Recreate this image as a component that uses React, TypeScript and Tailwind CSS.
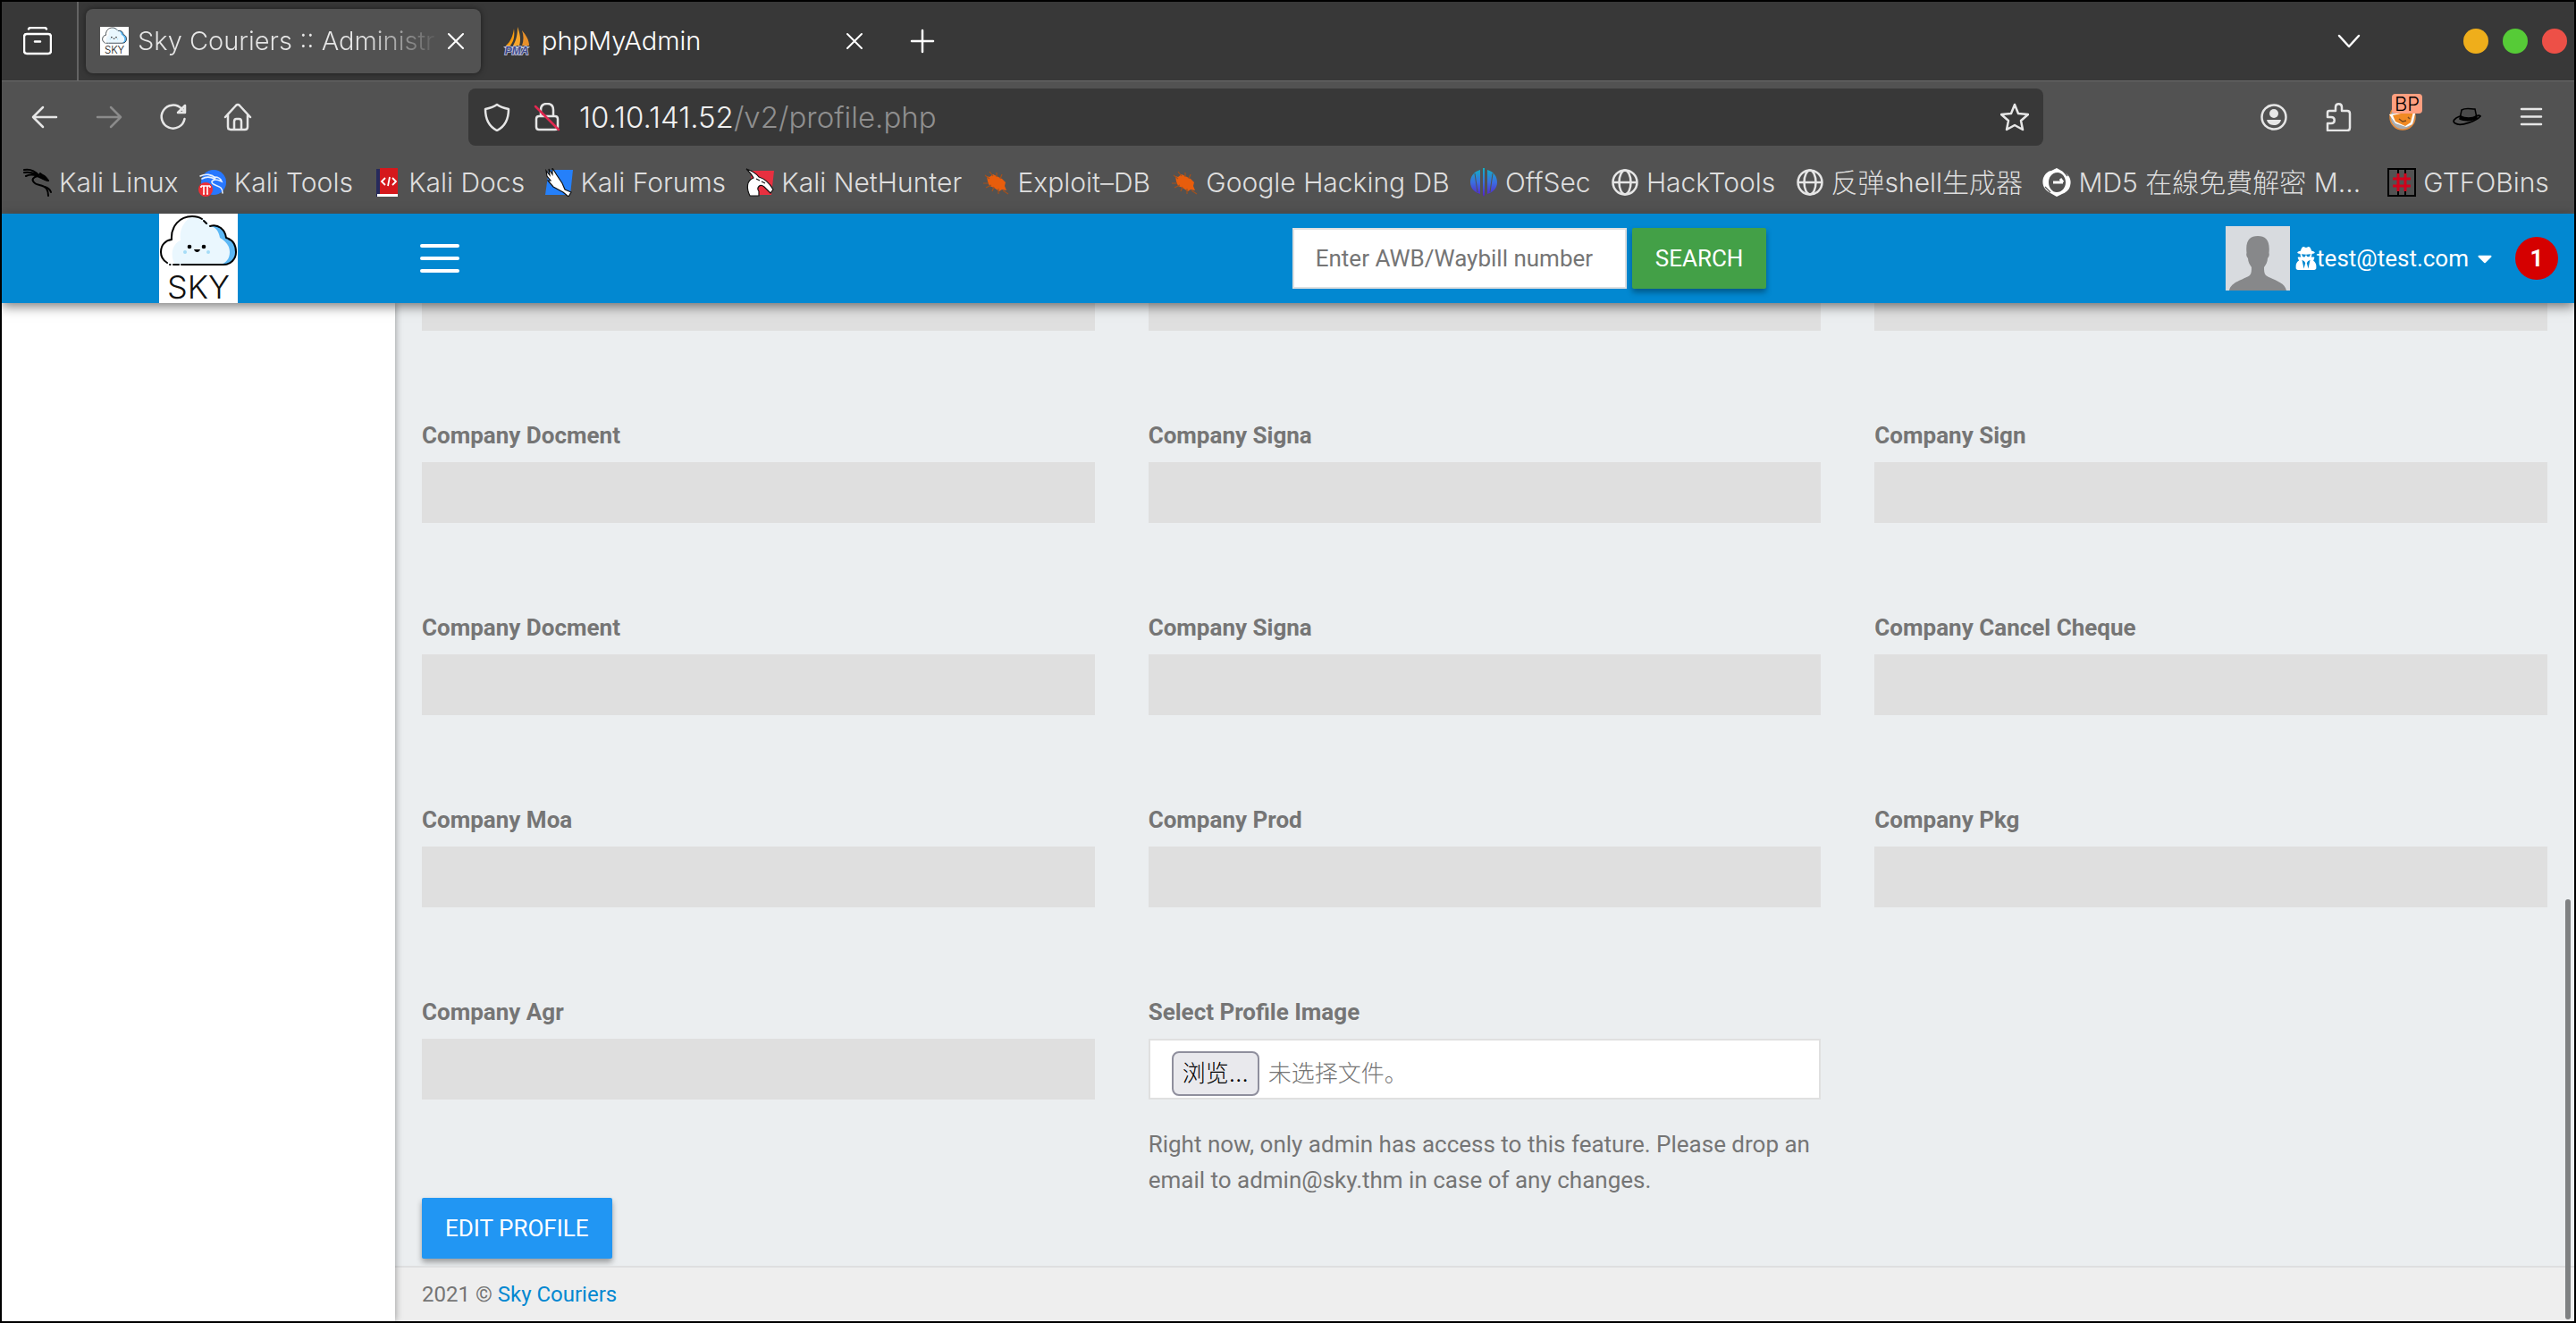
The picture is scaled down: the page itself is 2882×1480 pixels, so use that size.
import { ReactNode } from 'react'
import { FaCaretDown, FaUserSecret } from 'react-icons/fa'

const chromeFont = "font-['Inter','Noto_Sans_CJK_SC',sans-serif] font-light"

const fieldRows = [
    ['Company Docment', 'Company Signa', 'Company Sign'],
    ['Company Docment', 'Company Signa', 'Company Cancel Cheque'],
    ['Company Moa', 'Company Prod', 'Company Pkg'],
]

function SkyLogo(props: { className?: string }) {
    return (
        <svg viewBox="0 0 88 100" className={props.className} aria-hidden="true">
            <rect width="88" height="100" fill="#fff" />
            <path d="M56 14C66 11 74 18 75 27C82 29 86 35 86 43C86 51 80 57 72 57H18C8 57 2 51 2 43C2 35 7 30 14 29C13 14 23 3 37 3C46 3 53 7 56 14Z" fill="#5cb8f5" />
            <path d="M56 14C63 14 67 20 68 27C74 30 79 36 79 43C79 51 74 57 66 57H18C8 57 2 51 2 43C2 35 7 30 14 29C13 14 23 3 37 3C46 3 53 7 56 14Z" fill="#eaf7fe" />
            <path d="M18 57C8 57 2 51 2 43C2 35 7 30 14 29C13 14 23 3 37 3C28 8 22 18 24 30C14 34 12 48 18 57Z" fill="#fff" />
            <path d="M9 55C4 52 2 48 2 43C2 35 7 30 14 29C13 14 23 3 37 3C41 3 45 4 48 6M50 8L53 11M57 14C66 11 74 18 75 27C82 29 86 35 86 43C86 51 80 57 72 57H25M22 57H16M12 57H12.500" fill="none" stroke="#000" strokeWidth="2" strokeLinecap="round" strokeLinejoin="round" />
            <circle cx="34" cy="37" r="2.300" />
            <circle cx="50" cy="37" r="2.300" />
            <path d="M39 40H46C45 44 40 44 39 40Z" />
            <circle cx="29" cy="43" r="2" fill="#a5dcf7" />
            <circle cx="55" cy="43" r="2" fill="#a5dcf7" />
            <text x="44" y="95" textAnchor="middle" fontSize="36" fontWeight="300" fontFamily="Inter, sans-serif" fill="#111">SKY</text>
        </svg>
    )
}

function Stroke(props: { d: string; width?: number; className?: string }) {
    const { d, width = 2.5, className } = props

    return (
        <svg width="32" height="32" viewBox="0 0 32 32" fill="none" stroke="currentColor" strokeWidth={width} strokeLinecap="round" strokeLinejoin="round" className={className} aria-hidden="true">
            <path d={d} />
        </svg>
    )
}

function Icon(props: { children: ReactNode }) {
    return <svg width="32" height="32" viewBox="0 0 32 32" className="shrink-0" aria-hidden="true">{props.children}</svg>
}

function PmaIcon() {
    return (
        <Icon>
            <path d="M13 2C14 10 13 16 9 21H4C9 17 12 10 13 2Z" fill="#f89c0e" />
            <path d="M17 0C20 8 21 15 19 21H12C16 14 17 8 17 0Z" fill="#f6a52c" />
            <path d="M22 4C27 10 30 15 30 21H22C24 15 24 10 22 4Z" fill="#e8902a" />
            <path d="M1 22H31L29 24H3Z" fill="#b9bcc9" />
            <text x="16" y="31" textAnchor="middle" fontSize="12" fontWeight="700" fontStyle="italic" fontFamily="Liberation Sans, sans-serif" fill="#3f4a8c" stroke="#c9cbe0" strokeWidth="1.500" paintOrder="stroke">PMA</text>
        </Icon>
    )
}

function DragonIcon() {
    return (
        <Icon>
            <g fill="none" stroke="#000" strokeWidth="2" strokeLinecap="round" strokeLinejoin="round">
                <path d="M1 2C7 1 13 3 17 8M1 5C6 4 10 5 14 7M3 9C7 7 11 7 16 9" />
                <path d="M16 8C20 6 24 8 28 14C24 13 20 11 16 9C11 10 9 13 12 16C15 20 22 18 26 23C28 26 28 29 28 31" />
                <path d="M24 21C28 22 30 24 31 27M19 6L21 8" />
            </g>
            <path d="M18 8C22 8 26 10 29 15C25 14 20 13 18 8Z" />
        </Icon>
    )
}

function ToolsIcon() {
    return (
        <Icon>
            <circle cx="17" cy="16" r="14" fill="#2777ff" />
            <g fill="none" stroke="#e8f1ff" strokeWidth="1.600" strokeLinecap="round">
                <path d="M2 9C8 6 15 7 19 11M4 12C9 9 14 10 18 12M18 10C22 10 25 12 26 15C22 13 17 12 15 15C14 19 22 19 25 22C27 24 27 26 27 28" />
            </g>
            <circle cx="8" cy="24" r="8" fill="#ee2f35" />
            <path d="M3 20H13M3 20V22M13 20V22M6 20V29M10 20V29M5 29H7M9 29H11" stroke="#fff" strokeWidth="1.600" fill="none" />
        </Icon>
    )
}

function DocsIcon() {
    return (
        <Icon>
            <path d="M4 1H9V32H4Z" fill="#262a5c" />
            <path d="M8 0H28V30H8Z" fill="#d5181c" />
            <path d="M5 29H28V32H5Z" fill="#fff" />
            <path d="M14 11L10 15L14 19M22 11L26 15L22 19M19 10L17 20" stroke="#fff" strokeWidth="1.800" fill="none" />
        </Icon>
    )
}

function ForumsIcon() {
    return (
        <Icon>
            <path d="M5 2H32L29 30H1Z" fill="#2580fa" />
            <path d="M2 3L6 8L5 1L9 7L9 0L14 8L20 17L23 24L30 27L27 32L21 27L10 21L4 14L7 14L3 9Z" fill="#fff" stroke="#111" strokeWidth="1.200" />
        </Icon>
    )
}

function NetHunterIcon() {
    return (
        <Icon>
            <path d="M7 3H32L29 30H4Z" fill="#e83040" />
            <path d="M1 1C7 3 12 6 15 10C22 12 27 17 31 24L28 28L21 21C16 17 12 22 15 26V31H5C1 23 1 14 9 11C7 7 4 4 1 1Z" fill="#fff" stroke="#111" strokeWidth="1.200" />
            <path d="M18 15L22 17M12 12L16 14" stroke="#111" strokeWidth="1.200" />
        </Icon>
    )
}

function BugIcon() {
    return (
        <Icon>
            <path d="M6 9L9 10L13 7L19 10L23 12L27 16L26 20L28 25L23 24L20 26L14 22L9 20L7 15Z" fill="#e85d0c" />
            <path d="M9 4L13 9M4 8L9 12M2 17L8 17M5 22L11 19M12 26L14 21M19 29L19 23M17 5L17 10M23 7L21 12M24 25L30 29" stroke="#a3511d" strokeWidth="1.200" fill="none" />
        </Icon>
    )
}

function OffSecIcon() {
    return (
        <Icon>
            <defs>
                <linearGradient id="offsec" x1="0" y1="0" x2="0" y2="1">
                    <stop offset="0" stopColor="#0fb3c4" />
                    <stop offset="0.500" stopColor="#3b6ee0" />
                    <stop offset="1" stopColor="#5420c8" />
                </linearGradient>
            </defs>
            <path d="M12 2V29C5 27 1 22 1 16C1 9 5 4 12 2ZM15 0H17V32L16 30L15 32ZM20 2C27 4 31 9 31 16C31 22 27 27 20 29Z" fill="url(#offsec)" />
            <path d="M6 6L9 27M26 6L23 27" stroke="#525252" strokeWidth="1" />
        </Icon>
    )
}

function GlobeIcon() {
    return (
        <Icon>
            <g fill="none" stroke="#e6e6e6" strokeWidth="2.500">
                <circle cx="16" cy="16" r="13.500" />
                <ellipse cx="16" cy="16" rx="6.500" ry="13.500" />
                <path d="M3 16H29" />
            </g>
        </Icon>
    )
}

function Md5Icon() {
    return (
        <Icon>
            <path d="M16 0L23 4C30 7 33 13 31 20C30 25 25 28 22 29L16 32L9 28C2 25 -1 18 1 11C3 6 7 3 10 3ZM17 5C10 5 7 11 7 16C7 22 11 27 16 27C22 27 26 22 26 16C26 10 22 5 17 5Z" fill="#fff" fillRule="evenodd" />
            <path d="M12 16H23M20 12L23 16" stroke="#fff" strokeWidth="3" fill="none" />
            <path d="M3 21L9 27M23 3L28 9" stroke="#525252" strokeWidth="1.200" />
        </Icon>
    )
}

function GtfoIcon() {
    return (
        <Icon>
            <path d="M1 1H31V31H1ZM12 0V6M20 0V6M12 26V32M20 26V32" fill="none" stroke="#000" strokeWidth="2" />
            <path d="M12 6V26M20 6V26M6 12H26M6 20H26" stroke="#d0021b" strokeWidth="3" />
        </Icon>
    )
}

const bookmarks = [
    { name: 'Kali Linux', icon: <DragonIcon /> },
    { name: 'Kali Tools', icon: <ToolsIcon /> },
    { name: 'Kali Docs', icon: <DocsIcon /> },
    { name: 'Kali Forums', icon: <ForumsIcon /> },
    { name: 'Kali NetHunter', icon: <NetHunterIcon /> },
    { name: 'Exploit–DB', icon: <BugIcon /> },
    { name: 'Google Hacking DB', icon: <BugIcon /> },
    { name: 'OffSec', icon: <OffSecIcon /> },
    { name: 'HackTools', icon: <GlobeIcon /> },
    { name: '反弹shell生成器', icon: <GlobeIcon /> },
    { name: 'MD5 在線免費解密 M…', icon: <Md5Icon />, className: 'pr-2' },
    { name: 'GTFOBins', icon: <GtfoIcon /> },
]

function NavButton(props: { label: string; children: ReactNode; className?: string }) {
    return (
        <button aria-label={props.label} className={`flex h-16 w-[72px] items-center justify-center ${props.className ?? ''}`}>
            {props.children}
        </button>
    )
}

function TabBar() {
    return (
        <div className="flex h-[89px] items-center border-b border-[#6b6b6b] bg-[#383838] text-white">
            <button aria-label="Recent browsing" className="flex h-full w-[86px] items-center justify-center border-r-2 border-[#636363] pr-1">
                <Stroke d="M6 2.500C7 0.500 8 1 9 1H23C24 1 25 0.500 26 2.500M4 8H28Q31 8 31 11V27Q31 30 28 30H4Q1 30 1 27V11Q1 8 4 8ZM13 16.500H19" />
            </button>
            <div className="ml-2 flex h-[72px] w-[442px] items-center rounded-lg bg-[#525252] px-4 shadow-[0_0_6px_rgba(0,0,0,0.5)]">
                <span className="mr-2.5 flex h-8 w-8 shrink-0 justify-center bg-white"><SkyLogo className="h-8" /></span>
                <span className="flex-1 whitespace-nowrap bg-gradient-to-r from-[#e6e6e6] from-75% to-[#525252] bg-clip-text text-[29px] text-transparent">Sky Couriers :: Administr</span>
                <button aria-label="Close tab" className="-mr-1 shrink-0"><Stroke width={2} d="M8 8L24 24M24 8L8 24" /></button>
            </div>
            <div className="flex h-[72px] w-[454px] items-center gap-2 pl-6 pr-5">
                <PmaIcon />
                <span className="flex-1 pl-1 text-[29px]">phpMyAdmin</span>
                <button aria-label="Close tab"><Stroke width={2} d="M8 8L24 24M24 8L8 24" /></button>
            </div>
            <button aria-label="New tab" className="ml-6"><Stroke d="M16 4V28M4 16H28" /></button>
            <button aria-label="List all tabs" className="ml-auto mr-28"><Stroke d="M5 10L16 22L27 10" /></button>
            <div className="flex gap-4 pr-2">
                <button aria-label="Minimize" className="h-7 w-7 rounded-full bg-[#efae1b]" />
                <button aria-label="Maximize" className="h-7 w-7 rounded-full bg-[#56cb37]" />
                <button aria-label="Close window" className="h-7 w-7 rounded-full bg-[#ed5047]" />
            </div>
        </div>
    )
}

function NavBar() {
    return (
        <div className="flex h-20 items-center pl-3 pr-3 text-[#e6e6e6]">
            <NavButton label="Back"><Stroke d="M29 16H3M14 5L3 16L14 27" /></NavButton>
            <NavButton label="Forward" className="text-[#8b8b8b]"><Stroke d="M3 16H29M18 5L29 16L18 27" /></NavButton>
            <NavButton label="Reload"><Stroke d="M28.500 18A13 13 0 1 1 25 6.500L28.500 10M29 3V11H21L29 3Z" /></NavButton>
            <NavButton label="Home"><Stroke d="M2 16L14 3Q16 1 18 3L30 16M5 14V27Q5 30 8 30H24Q27 30 27 27V14M12 30V21Q12 18 14.500 18H17.500Q20 18 20 21V30" /></NavButton>
            <div className="mx-[222px] flex h-16 flex-1 items-center rounded-lg bg-[#383838] px-4">
                <button aria-label="Tracking protection"><Stroke d="M16 2C20 5 24 6 29 7C29 17 26 26 16 31C6 26 3 17 3 7C8 6 12 5 16 2Z" /></button>
                <button aria-label="Connection not secure" className="relative ml-6">
                    <Stroke d="M7 15H25Q28 15 28 18V27Q28 30 25 30H7Q4 30 4 27V18Q4 15 7 15ZM9 15V8Q9 1 16 1Q23 1 23 8V15" />
                    <Stroke d="M3 4L29 30" className="absolute inset-0 text-[#e22850]" />
                </button>
                <span className="ml-5 flex-1 text-[33px] text-[#f0f0f0]">10.10.141.52<span className="text-[#8f8f8f]">/v2/profile.php</span></span>
                <button aria-label="Bookmark this page"><Stroke d="M16 2L20 12L31 13L23 20L25 30L16 25L7 30L9 20L1 13L12 12Z" /></button>
            </div>
            <NavButton label="Account">
                <svg width="32" height="32" viewBox="0 0 32 32" fill="currentColor" aria-hidden="true">
                    <circle cx="16" cy="16" r="13.500" fill="none" stroke="currentColor" strokeWidth="2.500" />
                    <circle cx="16" cy="12" r="5" />
                    <path d="M8 19H24C23 23 20 25 16 25C12 25 9 23 8 19Z" />
                </svg>
            </NavButton>
            <NavButton label="Extensions"><Stroke d="M4 31H26Q29 31 29 28V12Q29 9 26 9H20V5C20 0 13 0 13 5V9H6Q4 9 4 11V16H8C13 16 13 23 8 23H4Z" /></NavButton>
            <NavButton label="FoxyProxy" className="relative">
                <svg width="32" height="32" viewBox="0 0 32 32" aria-hidden="true">
                    <circle cx="16" cy="16" r="14" fill="#a8acb0" stroke="#e58a3a" strokeWidth="1.500" />
                    <path d="M1 13L10 12L20 9L30 12L27 24L20 27L8 23Z" fill="#fff" />
                    <path d="M5 14L14 12L28 10L25 22L19 26L8 21Z" fill="#f08a24" />
                    <path d="M12 18L16 21L20 20M22 16L24 18" stroke="#7a4a20" strokeWidth="1.500" fill="none" />
                </svg>
                <span className="absolute left-6 top-1.5 flex h-[22px] w-[34px] items-center justify-center rounded-sm bg-[#ff9f80] text-[22px] leading-none text-black">BP</span>
            </NavButton>
            <NavButton label="Hat">
                <svg width="32" height="32" viewBox="0 0 32 32" aria-hidden="true">
                    <path d="M10 8C15 5 20 7 25 7L27 17C22 19 14 19 8 18Z" fill="#4a4a4a" stroke="#000" strokeWidth="1.500" />
                    <path d="M9 14C14 17 22 17 26 14L27 18C22 21 13 21 8 19Z" />
                    <path d="M8 15C2 17-1 21 3 23C9 27 27 20 31 15C30 14 28 14 27 15" fill="none" stroke="#000" strokeWidth="1.800" />
                </svg>
            </NavButton>
            <NavButton label="Open menu"><Stroke d="M5 7H27M5 15.500H27M5 24H27" /></NavButton>
        </div>
    )
}

function BookmarksBar() {
    return (
        <div className="flex h-[66px] items-center justify-between pl-6 pr-7 text-[#dedede]">
            {bookmarks.map((b, index) => (
                <a key={index} href="#" className={`flex items-center gap-2 whitespace-nowrap ${b.className ?? ''}`}>
                    {b.icon}
                    {b.name}
                </a>
            ))}
        </div>
    )
}

function Header() {
    return (
        <header className="relative z-20 flex h-[100px] shrink-0 items-center bg-[#0288d1] text-white shadow-[0_4px_12px_rgba(0,0,0,0.5)]">
            <a href="#" aria-label="Sky Couriers home" className="flex w-[440px] justify-center"><SkyLogo className="h-[100px]" /></a>
            <button aria-label="Toggle sidebar" className="ml-7 flex w-11 flex-col gap-2.5">
                <span className="h-1 rounded-full bg-white" />
                <span className="h-1 rounded-full bg-white" />
                <span className="h-1 rounded-full bg-white" />
            </button>
            <form className="flex flex-1 justify-center gap-1.5 pl-[418px]">
                <input type="text" aria-label="AWB/Waybill number" placeholder="Enter AWB/Waybill number" className="h-[68px] w-[374px] border-2 border-[#e0e0e0] bg-white px-6 text-[#757575] placeholder:text-[#757575]" />
                <button type="button" className="h-[68px] rounded-xs bg-[#43a047] px-[26px] shadow-[0_4px_6px_rgba(0,0,0,0.35)]">SEARCH</button>
            </form>
            <div className="flex items-center pr-[18px]">
                <svg width="72" height="72" viewBox="0 0 72 72" role="img" aria-label="User avatar">
                    <rect width="72" height="72" fill="#d8dbdf" />
                    <path d="M4 72C6 62 20 60 27 55C29 53 29 49 29 46C27 43 25 40 25 36C23 34 23 31 23.500 30C22 16 27 11 36 11C45 11 50 16 48.500 30C49 31 49 34 47 36C47 40 45 43 43 46C43 49 43 53 45 55C52 60 66 62 68 72Z" fill="#87888a" />
                </svg>
                <button className="ml-1.5 flex items-center">
                    <FaUserSecret className="h-[26px] w-6" />
                    test@test.com
                    <FaCaretDown className="ml-1.5 h-[26px] w-6" />
                </button>
                <span className="ml-[22px] flex h-12 w-12 items-center justify-center rounded-full bg-[#d50000] font-bold">1</span>
            </div>
        </header>
    )
}

function DisabledField(props: { id: string; label: string }) {
    const { id, label } = props

    return (
        <div>
            <label htmlFor={id} className="mb-2.5 block font-bold">{label}</label>
            <input id={id} type="text" disabled className="block h-[68px] w-full bg-[#dfdfdf]" />
        </div>
    )
}

function ProfileForm() {
    return (
        <form className="px-[30px]">
            <div className="grid grid-cols-3 gap-x-[60px] gap-y-[97px]">
                {['a', 'b', 'c'].map((key) => (
                    <input key={key} type="text" aria-label="Company field" disabled className="block h-[68px] w-full bg-[#dfdfdf]" />
                ))}
                {fieldRows.map((row, i) => row.map((label, j) => (
                    <DisabledField key={`${i}-${j}`} id={`field-${i}-${j}`} label={label} />
                )))}
                <DisabledField id="company-agr" label="Company Agr" />
                <div>
                    <label htmlFor="profile-image" className="mb-2.5 block font-bold">Select Profile Image</label>
                    <div className="relative flex h-[68px] items-start gap-2.5 border-2 border-[#e0e0e0] bg-white px-6 pt-3 font-['Inter','Noto_Sans_CJK_SC',sans-serif] font-light">
                        <input id="profile-image" type="file" className="sr-only" />
                        <label htmlFor="profile-image" className="flex h-[50px] items-center rounded-lg border-2 border-[#8f8f9d] bg-[#e9e9ed] px-2.5 text-black">浏览…</label>
                        <span className="leading-[50px]">未选择文件。</span>
                    </div>
                    <p className="mt-[30px]">Right now, only admin has access to this feature. Please drop an email to admin@sky.thm in case of any changes.</p>
                </div>
            </div>
            <button type="button" className="mb-2 block h-[68px] rounded-xs bg-[#2196f3] px-[26px] text-white shadow-[0_4px_6px_rgba(0,0,0,0.35)]">EDIT PROFILE</button>
        </form>
    )
}

export default function App() {
    return (
        <div className="flex h-screen flex-col overflow-hidden border-2 border-black bg-[#525252]">
            <div className={`${chromeFont} border-b-2 border-[#555] text-[30px] leading-10`}>
                <TabBar />
                <NavBar />
                <BookmarksBar />
            </div>
            <div className="relative flex min-h-0 flex-1 flex-col font-['Roboto',sans-serif] text-[26px] leading-10 text-[#757575]">
                <Header />
                <div className="flex min-h-0 flex-1">
                    <aside className="z-10 w-[440px] shrink-0 bg-white shadow-[0_0_8px_rgba(0,0,0,0.4)]" />
                    <main className="flex flex-1 flex-col justify-end overflow-hidden bg-[#ebeef0]">
                        <ProfileForm />
                        <footer className="border-t-2 border-[#dedfe0] bg-[#eee] px-[30px] py-2.5 text-2xl leading-10">
                            2021 © <a href="#" className="text-[#0288d1]">Sky Couriers</a>
                        </footer>
                    </main>
                </div>
                <div className="absolute bottom-0.5 right-1 z-30 h-[470px] w-1.5 rounded-full bg-[#7f8182]" />
            </div>
        </div>
    )
}
